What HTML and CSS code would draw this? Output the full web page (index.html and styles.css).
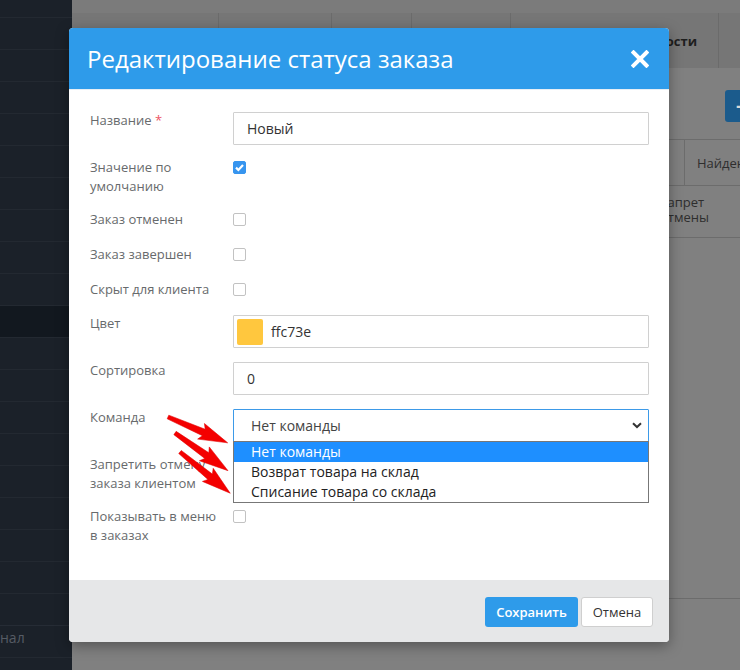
FILE: index.html
```html
<!DOCTYPE html>
<html lang="ru">
<head>
<meta charset="utf-8">
<title>Редактирование статуса заказа</title>
<link rel="stylesheet" href="styles.css">
</head>
<body>
<div class="app">
  <aside class="sidebar">
    <div class="side-item"></div><div class="side-item"></div><div class="side-item"></div><div class="side-item"></div>
    <div class="side-item"></div><div class="side-item"></div><div class="side-item"></div><div class="side-item"></div>
    <div class="side-item"></div><div class="side-item active"></div><div class="side-item"></div><div class="side-item"></div>
    <div class="side-item"></div><div class="side-item"></div><div class="side-item"></div><div class="side-item"></div>
    <div class="side-item"></div><div class="side-item"></div><div class="side-item"></div>
    <div class="side-item side-text">нал</div>
    <div class="side-item"></div>
  </aside>
  <main class="page">
    <div class="topstrip"></div>
    <div class="thead">
      <div class="th w1"></div>
      <div class="th w2"></div>
      <div class="th w3"></div>
      <div class="th w4"></div>
      <div class="th w5">Видимости</div>
      <div class="th w6"></div>
    </div>
    <div class="toolbar"><span class="btn-plus">+</span></div>
    <div class="trow trow-head">
      <div class="td td-sep">Найден</div>
    </div>
    <div class="trow trow-text">
      <div class="td td-wrap">Запрет<br>отмены</div>
    </div>
    <div class="trow trow-tall"></div>
  </main>
</div>

<div class="modal">
  <div class="modal-header">
    <h4 class="modal-title">Редактирование статуса заказа</h4>
    <svg class="close" width="18" height="18" viewBox="0 0 18 18"><path d="M2.5 2.5 L15.5 15.5 M15.5 2.5 L2.5 15.5" stroke="#fff" stroke-width="4" stroke-linecap="square"/></svg>
  </div>
  <div class="modal-body">
    <div class="form">
      <div class="row row-input">
        <div class="label">Название <span class="req">*</span></div>
        <div class="ctrl"><div class="input">Новый</div></div>
      </div>
      <div class="row row-check row-two">
        <div class="label">Значение по умолчанию</div>
        <div class="ctrl"><span class="cb checked"><svg width="13" height="13" viewBox="0 0 13 13"><path d="M3 6.6 L5.4 9 L10 4" fill="none" stroke="#fff" stroke-width="2.2"/></svg></span></div>
      </div>
      <div class="row row-check row-b16">
        <div class="label">Заказ отменен</div>
        <div class="ctrl"><span class="cb"></span></div>
      </div>
      <div class="row row-check row-b16">
        <div class="label">Заказ завершен</div>
        <div class="ctrl"><span class="cb"></span></div>
      </div>
      <div class="row row-check">
        <div class="label">Скрыт для клиента</div>
        <div class="ctrl"><span class="cb"></span></div>
      </div>
      <div class="row row-input">
        <div class="label">Цвет</div>
        <div class="ctrl"><div class="input input-color"><span class="swatch"></span><span>ffc73e</span></div></div>
      </div>
      <div class="row row-input">
        <div class="label">Сортировка</div>
        <div class="ctrl"><div class="input">0</div></div>
      </div>
      <div class="row row-input">
        <div class="label">Команда</div>
        <div class="ctrl ctrl-select">
          <div class="input select">
            <span>Нет команды</span>
            <svg class="chev" width="10" height="7" viewBox="0 0 10 7"><path d="M1 1.2 L5 5 L9 1.2" fill="none" stroke="#333" stroke-width="2"/></svg>
          </div>
          <div class="dropdown">
            <div class="opt sel">Нет команды</div>
            <div class="opt">Возврат товара на склад</div>
            <div class="opt">Списание товара со склада</div>
          </div>
        </div>
      </div>
      <div class="row row-check row-two">
        <div class="label">Запретить отмену заказа клиентом</div>
        <div class="ctrl"><span class="cb"></span></div>
      </div>
      <div class="row row-check row-two row-last">
        <div class="label">Показывать в меню в заказах</div>
        <div class="ctrl"><span class="cb"></span></div>
      </div>
    </div>
  </div>
  <div class="modal-footer">
    <span class="btn btn-primary">Сохранить</span>
    <span class="btn btn-white">Отмена</span>
  </div>
</div>

<svg class="arrows" width="740" height="670" viewBox="0 0 740 670">
  <g fill="#f40000" stroke="#e00000" stroke-width="0.5" stroke-linejoin="round">
    <polygon transform="translate(168 417) rotate(23.4)" points="0,-2 39,-3.5 36,-8.5 65,0 36,8.5 39,3.5 0,2"/>
    <polygon transform="translate(175 433) rotate(35.4)" points="0,-2 39,-3.5 36,-8.5 65,0 36,8.5 39,3.5 0,2"/>
    <polygon transform="translate(180 452) rotate(39.4)" points="0,-2 39,-3.5 36,-8.5 65,0 36,8.5 39,3.5 0,2"/>
  </g>
</svg>
</body>
</html>
```

FILE: styles.css
```css
html, body {
  margin: 0;
  padding: 0;
}
body {
  width: 740px;
  height: 670px;
  overflow: hidden;
  position: relative;
  background: #808080;
  font-family: "Open Sans", "Noto Sans", sans-serif;
}

/* background page (under the dim) */
.app {
  display: flex;
  height: 670px;
}
.sidebar {
  width: 72px;
  flex: none;
  background: #1b2129;
  padding-top: 17px;
  box-sizing: border-box;
  overflow: hidden;
}
.side-item {
  height: 32px;
  border-top: 1px solid #232931;
  box-sizing: border-box;
}
.side-item.active {
  background: #12181f;
}
.side-text {
  color: #565c65;
  font-size: 14px;
  line-height: 24px;
  border-top-color: #262c35;
}
.page {
  flex: 1;
  display: flex;
  flex-direction: column;
  overflow: hidden;
  min-width: 0;
}
.topstrip {
  height: 13px;
  background: #7b7b7b;
  flex: none;
}
.thead {
  height: 55px;
  background: #767676;
  display: flex;
  flex: none;
}
.th {
  box-sizing: border-box;
  border-right: 1px solid #6b6b6b;
  flex: none;
  display: flex;
  align-items: center;
  justify-content: flex-end;
  font-size: 13px;
  font-weight: 700;
  color: #1e1e1e;
  white-space: nowrap;
  overflow: hidden;
}
.w1 { width: 147px; }
.w2 { width: 113px; }
.w3 { width: 80px; }
.w4 { width: 99px; }
.w5 { width: 208px; padding-right: 21px; }
.w6 { width: 40px; border-right: none; }
.toolbar {
  height: 71px;
  flex: none;
  box-sizing: border-box;
  padding: 22px 0 0 653px;
  display: flex;
}
.btn-plus {
  flex: none;
  width: 34px;
  height: 32px;
  background: #1b5b8c;
  border-radius: 3px;
  color: #d9d9d9;
  font-size: 22px;
  font-weight: 700;
  line-height: 31px;
  text-align: center;
}
.trow {
  flex: none;
  box-sizing: border-box;
  border-bottom: 1px solid #6c6c6c;
  display: flex;
}
.trow-head {
  height: 47px;
  border-top: 1px solid #6c6c6c;
}
.td {
  font-size: 13px;
  color: #2e2e2e;
  white-space: nowrap;
}
.td-sep {
  margin-left: 612px;
  border-left: 1px solid #6c6c6c;
  padding-left: 12px;
  display: flex;
  align-items: center;
}
.trow-text {
  height: 52px;
  align-items: center;
}
.td-wrap {
  margin-left: 588px;
  line-height: 15px;
  margin-top: -4px;
}
.trow-tall {
  height: 361px;
}

/* modal */
.modal {
  position: absolute;
  left: 69px;
  top: 28px;
  width: 600px;
  background: #fff;
  border-radius: 4px;
  box-shadow: 0 4px 14px rgba(0, 0, 0, 0.35);
  overflow: visible;
}
.modal-header {
  height: 62px;
  background: #2e9bea;
  border-radius: 4px 4px 0 0;
  box-sizing: border-box;
  border-bottom: 1px solid #e6eef5;
  padding: 0 20px 0 18px;
  display: flex;
  align-items: center;
  justify-content: space-between;
}
.modal-title {
  margin: 0;
  font-size: 24px;
  font-weight: 400;
  color: #fff;
  line-height: 30px;
  margin-top: 1px;
}
.close {
  display: block;
  margin-top: 1px;
}
.modal-body {
  position: relative;
  padding: 21px 20px 35px 21px;
}
.form {
  display: flex;
  flex-direction: column;
}
.row {
  display: grid;
  grid-template-columns: 143px 416px;
  align-items: start;
}
.label {
  font-size: 13px;
  line-height: 19px;
  color: #676a6c;
  padding-right: 12px;
}
.req {
  color: #ed5565;
}
.row-input {
  margin-bottom: 13px;
}
.row-check {
  margin-bottom: 15px;
}
.row-two {
  margin-bottom: 14px;
}
.row-b16 {
  margin-bottom: 16px;
}
.row-last {
  margin-bottom: 0;
}
.ctrl {
  position: relative;
}
.input {
  box-sizing: border-box;
  height: 33px;
  margin-top: 1px;
  border: 1px solid #d0d0d0;
  border-radius: 1px;
  padding: 0 13px;
  display: flex;
  align-items: center;
  font-size: 14px;
  color: #333;
}
.input-color {
  padding-left: 3px;
}
.swatch {
  width: 26px;
  height: 26px;
  background: #ffc73e;
  border-radius: 2px;
  margin-right: 8px;
  flex: none;
}
.select {
  border-color: #3d9ae8;
  padding-left: 17px;
  padding-right: 6px;
  justify-content: space-between;
  color: #444;
}
.chev {
  display: block;
}
.dropdown {
  position: absolute;
  left: 0;
  top: 33px;
  width: 416px;
  box-sizing: border-box;
  border: 1px solid #777;
  background: #fff;
  z-index: 2;
}
.opt {
  height: 20px;
  line-height: 20px;
  padding-left: 17px;
  font-size: 14px;
  color: #222;
  white-space: nowrap;
}
.opt.sel {
  background: #1e8fff;
  color: #fff;
}
.cb {
  display: block;
  width: 13px;
  height: 13px;
  box-sizing: border-box;
  border: 1px solid #c2c2c2;
  border-radius: 2px;
  background: #fff;
  margin-top: 3px;
}
.cb.checked {
  background: #3795ef;
  border-color: #3795ef;
  position: relative;
}
.cb.checked svg {
  position: absolute;
  left: -1px;
  top: -1px;
}
.modal-footer {
  height: 62px;
  box-sizing: border-box;
  background: #e6e7e8;
  border-radius: 0 0 4px 4px;
  padding: 17px 16px 0 0;
  display: flex;
  justify-content: flex-end;
  gap: 3px;
}
.btn {
  box-sizing: border-box;
  height: 30px;
  border-radius: 3px;
  font-size: 13px;
  display: flex;
  align-items: center;
  justify-content: center;
}
.btn-primary {
  width: 93px;
  background: #2e9bea;
  color: #fff;
  font-weight: 600;
}
.btn-white {
  width: 72px;
  background: #fff;
  border: 1px solid #cfcfcf;
  color: #333;
}
.arrows {
  position: absolute;
  left: 0;
  top: 0;
  pointer-events: none;
  z-index: 5;
}
```
